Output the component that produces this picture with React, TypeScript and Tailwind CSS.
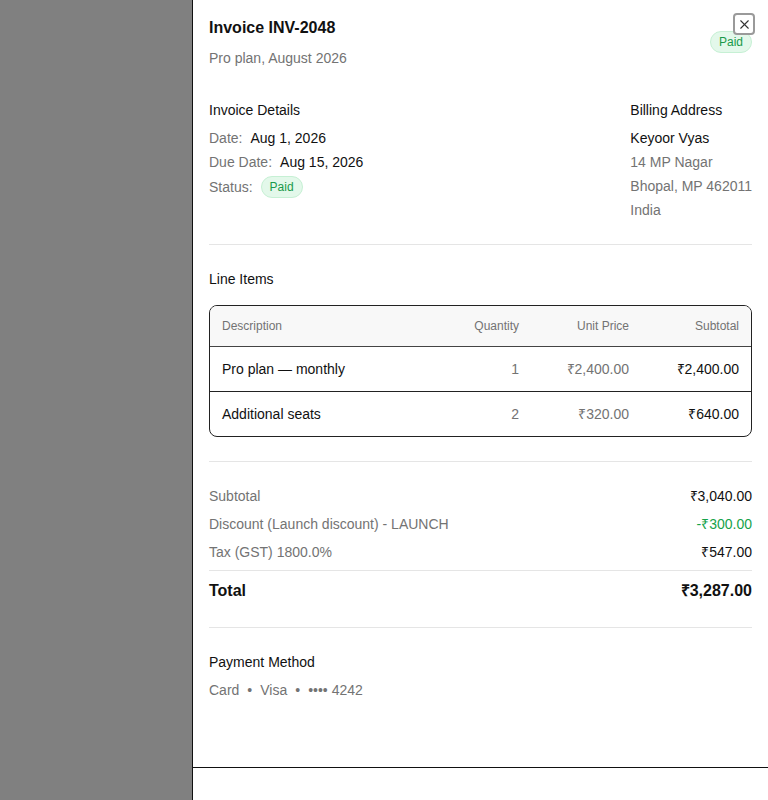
import { X } from 'lucide-react';

interface LineItem {
  description: string;
  quantity: number;
  unitPrice: string;
  subtotal: string;
}

const items: LineItem[] = [
  { description: 'Pro plan — monthly', quantity: 1, unitPrice: '₹2,400.00', subtotal: '₹2,400.00' },
  { description: 'Additional seats', quantity: 2, unitPrice: '₹320.00', subtotal: '₹640.00' },
];

function PaidBadge() {
  return (
    <span className="inline-flex items-center h-[22px] px-2 rounded-full border border-[#c6f0d4] bg-[#e3f8ea] text-xs text-[#1a9a4a]">
      Paid
    </span>
  );
}

export default function App() {
  return (
    <div className="h-[800px] w-[768px] bg-[#808080] flex justify-end font-['Liberation_Sans',Arial,sans-serif] text-[#111]">
      <div className="relative w-[576px] h-full bg-white border-l border-[#111] flex flex-col">
        {/* close */}
        <button className="absolute top-[13px] right-[13px] w-[22px] h-[22px] flex items-center justify-center rounded border-2 border-[#9a9a9a] bg-white text-[#333]">
          <X size={15} strokeWidth={1.75} />
        </button>

        <div className="flex-1 px-4 pt-4">
          {/* header */}
          <div className="flex items-center justify-between">
            <div>
              <h2 className="text-base leading-6 font-bold">Invoice INV-2048</h2>
              <p className="mt-2 text-sm leading-5 text-[#737373]">Pro plan, August 2026</p>
            </div>
            <PaidBadge />
          </div>

          {/* details + billing */}
          <div className="mt-8 flex justify-between">
            <div className="space-y-1 text-sm leading-5">
              <h3 className="mb-2">Invoice Details</h3>
              <div>
                <span className="text-[#737373]">Date:</span>
                <span className="ml-2">Aug 1, 2026</span>
              </div>
              <div>
                <span className="text-[#737373]">Due Date:</span>
                <span className="ml-2">Aug 15, 2026</span>
              </div>
              <div className="flex items-center">
                <span className="text-[#737373]">Status:</span>
                <span className="ml-2"><PaidBadge /></span>
              </div>
            </div>
            <div className="space-y-1 text-sm leading-5">
              <h3 className="mb-2">Billing Address</h3>
              <div>Keyoor Vyas</div>
              <div className="text-[#737373]">14 MP Nagar</div>
              <div className="text-[#737373]">Bhopal, MP 462011</div>
              <div className="text-[#737373]">India</div>
            </div>
          </div>

          <div className="my-6 border-t border-[#e5e5e5]" />

          {/* line items */}
          <h3 className="text-sm leading-5">Line Items</h3>
          <div className="mt-4 border border-[#222] rounded-lg overflow-hidden text-sm">
            <div className="flex bg-[#f8f8f8] border-b border-[#444] text-xs leading-4 text-[#737373]">
              <div className="flex-1 px-3 py-3">Description</div>
              <div className="w-[110px] px-3 py-3 text-right">Quantity</div>
              <div className="w-[110px] px-3 py-3 text-right">Unit Price</div>
              <div className="w-[110px] px-3 py-3 text-right">Subtotal</div>
            </div>
            {items.map((item, i) => (
              <div key={item.description} className={`flex leading-5 ${i < items.length - 1 ? 'border-b border-[#222]' : ''}`}>
                <div className="flex-1 px-3 py-3">{item.description}</div>
                <div className="w-[110px] px-3 py-3 text-right text-[#737373]">{item.quantity}</div>
                <div className="w-[110px] px-3 py-3 text-right text-[#737373]">{item.unitPrice}</div>
                <div className="w-[110px] px-3 py-3 text-right">{item.subtotal}</div>
              </div>
            ))}
          </div>

          <div className="my-6 border-t border-[#e5e5e5]" />

          {/* totals */}
          <div className="space-y-2 text-sm leading-5">
            <div className="flex justify-between">
              <span className="text-[#737373]">Subtotal</span>
              <span>₹3,040.00</span>
            </div>
            <div className="flex justify-between">
              <span className="text-[#737373]">Discount (Launch discount) - LAUNCH</span>
              <span className="text-[#16a34a]">-₹300.00</span>
            </div>
            <div className="flex justify-between">
              <span className="text-[#737373]">Tax (GST) 1800.0%</span>
              <span>₹547.00</span>
            </div>
            <div className="border-t border-[#e5e5e5] pt-2 flex justify-between text-base leading-6 font-bold">
              <span>Total</span>
              <span>₹3,287.00</span>
            </div>
          </div>

          <div className="my-6 border-t border-[#e5e5e5]" />

          {/* payment */}
          <h3 className="text-sm leading-5">Payment Method</h3>
          <p className="mt-2 text-sm leading-5 text-[#737373]">
            Card<span className="mx-2">•</span>Visa<span className="mx-2">•</span>•••• 4242
          </p>
        </div>

        <div className="h-[33px] border-t border-[#111]" />
      </div>
    </div>
  );
}
